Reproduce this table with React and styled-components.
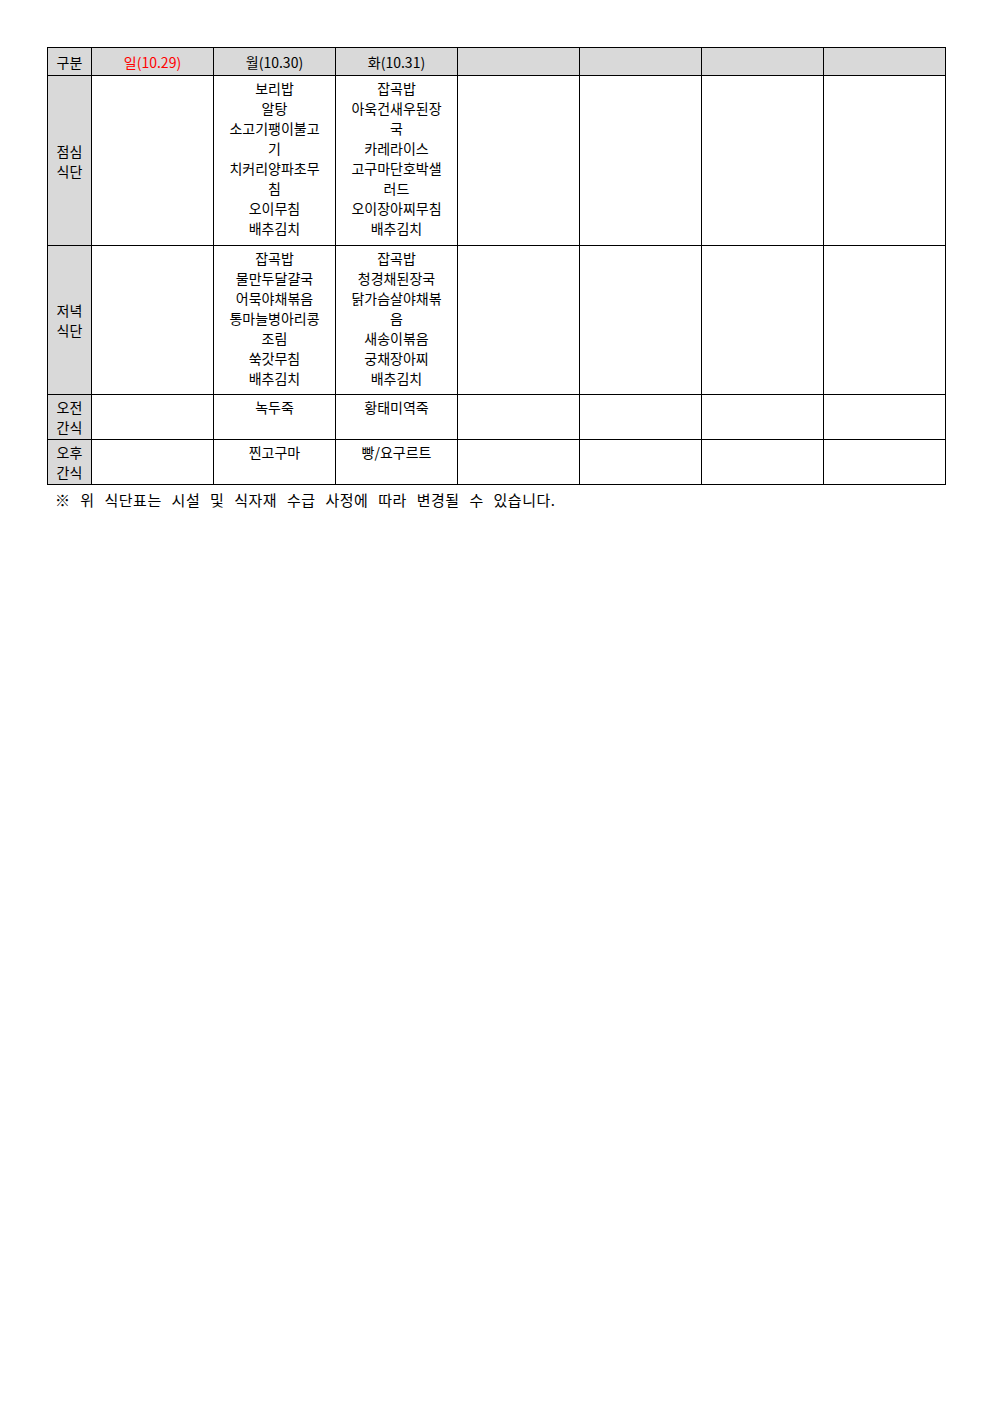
import styled, { createGlobalStyle } from "styled-components";

const GlobalStyle = createGlobalStyle`
    body {
        margin: 0;
        background: #fff;
        font-family: "Noto Sans CJK KR", "Noto Sans", sans-serif;
        color: #000;
    }
`;

const Page = styled.div`
    padding: 47px 0 0 47px;
`;

const MenuTable = styled.table`
    border-collapse: collapse;
    table-layout: fixed;
    width: 899px;
    font-size: 14px;
    line-height: 20px;
`;

const HeadCell = styled.th`
    background: #d9d9d9;
    border: 1px solid #000;
    height: 27px;
    padding: 0;
    font-weight: normal;
    text-align: center;
    vertical-align: middle;
    color: ${(p) => (p.$holiday ? "#ff0000" : "#000")};
`;

const LabelCell = styled.th`
    background: #d9d9d9;
    border: 1px solid #000;
    padding: 0;
    font-weight: normal;
    text-align: center;
    vertical-align: middle;
`;

const Cell = styled.td`
    border: 1px solid #000;
    padding: 2px 0 0;
    text-align: center;
    vertical-align: top;
`;

const Row = styled.tr`
    height: ${(p) => p.$height}px;
`;

const Note = styled.p`
    margin: 4px 0 0 8px;
    font-size: 15px;
    letter-spacing: 0.5px;
    word-spacing: 6px;
`;

const days = [
    { label: "일(10.29)", holiday: true },
    { label: "월(10.30)" },
    { label: "화(10.31)" },
    { label: "" },
    { label: "" },
    { label: "" },
    { label: "" },
];

const meals = [
    {
        label: ["점심", "식단"],
        height: 170,
        cells: [
            [],
            ["보리밥", "알탕", "소고기팽이불고", "기", "치커리양파초무", "침", "오이무침", "배추김치"],
            ["잡곡밥", "아욱건새우된장", "국", "카레라이스", "고구마단호박샐", "러드", "오이장아찌무침", "배추김치"],
        ],
    },
    {
        label: ["저녁", "식단"],
        height: 149,
        cells: [
            [],
            ["잡곡밥", "물만두달걀국", "어묵야채볶음", "통마늘병아리콩", "조림", "쑥갓무침", "배추김치"],
            ["잡곡밥", "청경채된장국", "닭가슴살야채볶", "음", "새송이볶음", "궁채장아찌", "배추김치"],
        ],
    },
    {
        label: ["오전", "간식"],
        height: 45,
        cells: [[], ["녹두죽"], ["황태미역죽"]],
    },
    {
        label: ["오후", "간식"],
        height: 45,
        cells: [[], ["찐고구마"], ["빵/요구르트"]],
    },
];

const Lines = ({ lines }) =>
    lines.map((line, i) => <div key={i}>{line}</div>);

const App = () => {
    return (
        <Page>
            <GlobalStyle />
            <MenuTable>
                <colgroup>
                    <col style={{ width: 44 }} />
                    {days.map((_, i) => (
                        <col key={i} style={{ width: 122 }} />
                    ))}
                </colgroup>
                <thead>
                    <tr>
                        <HeadCell>구분</HeadCell>
                        {days.map((d, i) => (
                            <HeadCell key={i} $holiday={d.holiday}>
                                {d.label}
                            </HeadCell>
                        ))}
                    </tr>
                </thead>
                <tbody>
                    {meals.map((meal, r) => (
                        <Row key={r} $height={meal.height}>
                            <LabelCell>
                                <Lines lines={meal.label} />
                            </LabelCell>
                            {days.map((_, c) => (
                                <Cell key={c}>
                                    <Lines lines={meal.cells[c] || []} />
                                </Cell>
                            ))}
                        </Row>
                    ))}
                </tbody>
            </MenuTable>
            <Note>※ 위 식단표는 시설 및 식자재 수급 사정에 따라 변경될 수 있습니다.</Note>
        </Page>
    );
};

export default App;
